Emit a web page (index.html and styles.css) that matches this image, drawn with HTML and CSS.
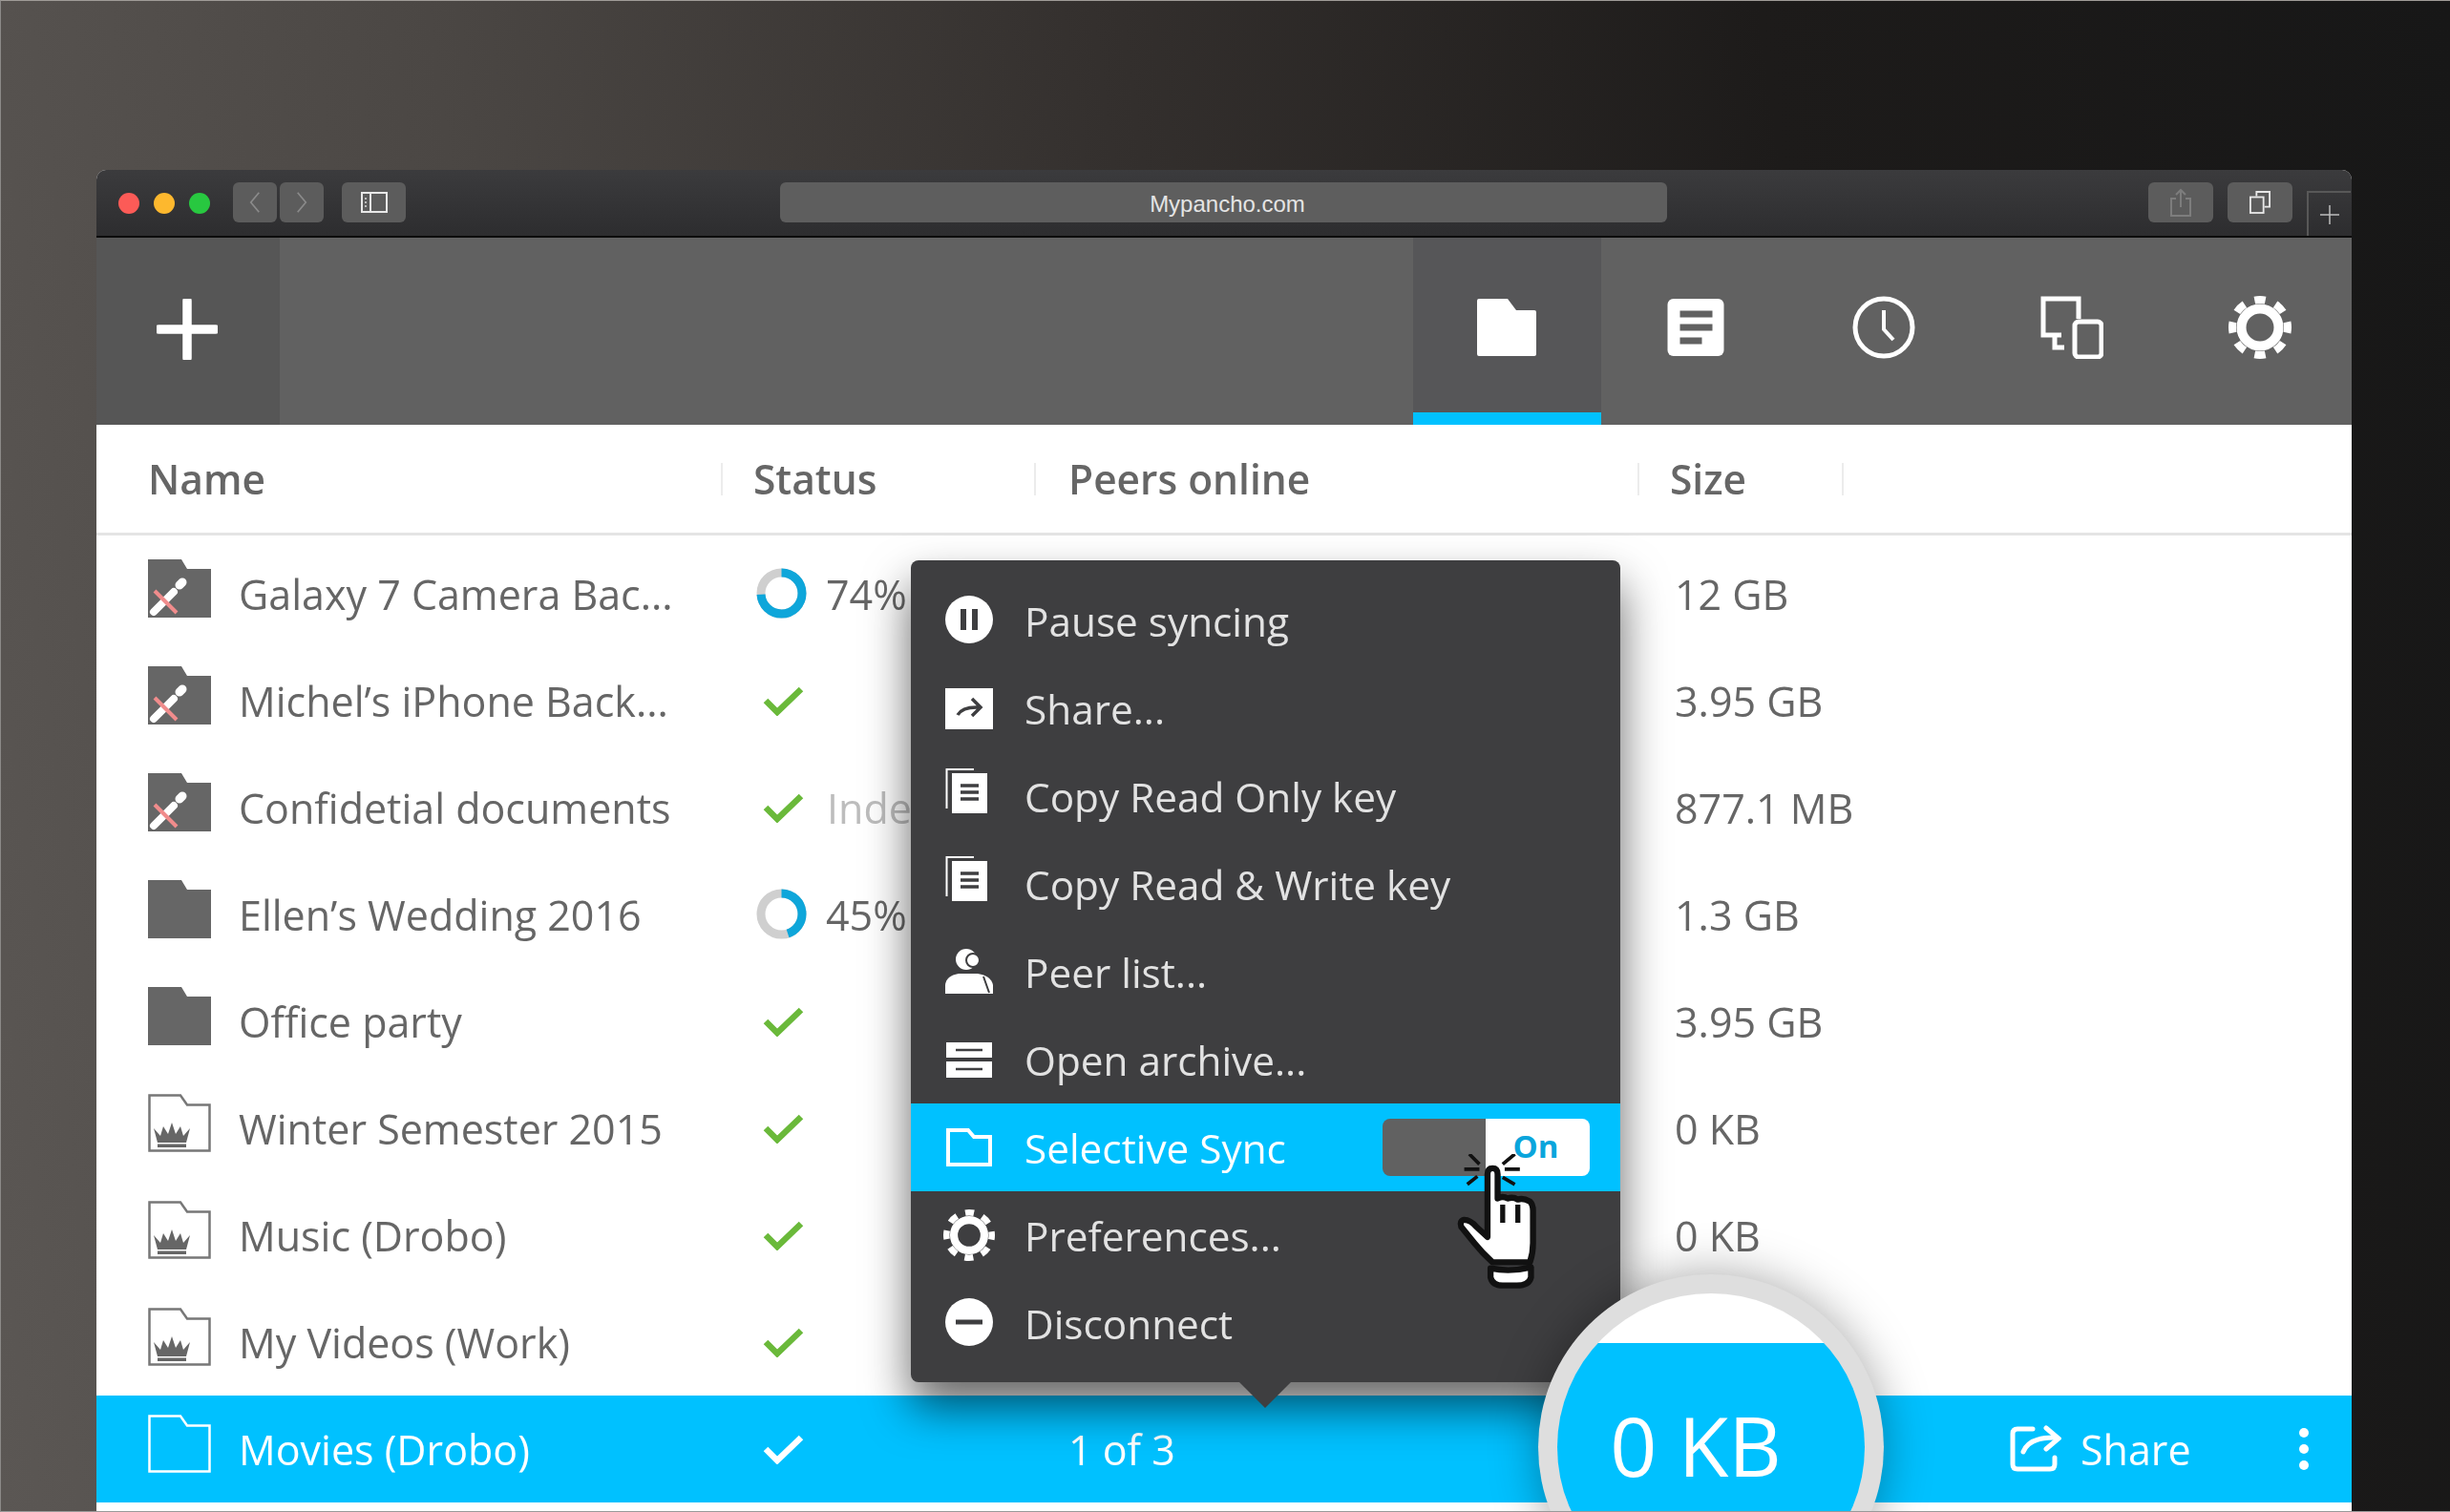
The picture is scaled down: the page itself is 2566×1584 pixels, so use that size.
FILE: index.html
```html
<!DOCTYPE html>
<html lang="en">
<head>
<meta charset="UTF-8" />
<title>Mypancho.com</title>
<link rel="stylesheet" href="styles.css">
</head>
<body>

<svg class="defs" width="0" height="0">
  <defs>
    <symbol id="folder" viewBox="0 0 66 61">
      <path d="M0 0H35L41 10H66V61H0Z" fill="#666"/>
    </symbol>
    <symbol id="folder-off" viewBox="0 0 66 61">
      <path d="M0 0H35L41 10H66V61H0Z" fill="#666"/>
      <path d="M6 55L27 34" stroke="#fff" stroke-width="8" stroke-linecap="round"/>
      <path d="M33 27L36 24" stroke="#fff" stroke-width="9" stroke-linecap="round"/>
      <path d="M7 33L30 56" stroke="#f08c8c" stroke-width="4"/>
    </symbol>
    <symbol id="folder-crown" viewBox="0 0 66 61">
      <path d="M1.500 1.500H34L41 11.500H64.500V59.500H1.500Z" fill="#fff" stroke="#777" stroke-width="2.500"/>
      <path d="M6 36L13 44L16 34L21 42L25 30L29 42L34 34L37 44L44 36L40 51H10Z" fill="#666"/>
      <path d="M10 52.500H40V56H10Z" fill="#666"/>
    </symbol>
    <symbol id="folder-line" viewBox="0 0 66 61">
      <path d="M1.500 1.500H34L41 11.500H64.500V59.500H1.500Z" fill="none" stroke="#fff" stroke-width="2.500"/>
    </symbol>
    <symbol id="check" viewBox="0 0 43 31">
      <path d="M3 15L15 27L40 3" fill="none" stroke="currentColor" stroke-width="6.500"/>
    </symbol>
    <symbol id="gear" viewBox="0 0 66 66">
      <circle cx="33" cy="33" r="29" fill="none" stroke="currentColor" stroke-width="8" pathLength="80" stroke-dasharray="5 5" stroke-dashoffset="2.500"/>
      <circle cx="33" cy="33" r="19.500" fill="none" stroke="currentColor" stroke-width="10"/>
    </symbol>
    <symbol id="copy" viewBox="0 0 44 48">
      <path d="M1.500 43V2H30" fill="none" stroke="#fff" stroke-width="2"/>
      <path d="M7 6H44V48H7Z" fill="#fff"/>
      <path d="M16 19H35M16 26H35M16 33H35" stroke="#3e3e40" stroke-width="3.500"/>
    </symbol>
  </defs>
</svg>

<div class="desk">
  <div class="window">

    <div class="titlebar">
      <div class="lights">
        <span class="light red"></span>
        <span class="light yellow"></span>
        <span class="light green"></span>
      </div>
      <div class="nav-pair">
        <span class="tbtn nav">
          <svg class="chev" viewBox="0 0 14 28"><path d="M12 2L2 14L12 26" fill="none" stroke="#8a8a8a" stroke-width="2"/></svg>
        </span>
        <span class="tbtn nav">
          <svg class="chev" viewBox="0 0 14 28"><path d="M2 2L12 14L2 26" fill="none" stroke="#8a8a8a" stroke-width="2"/></svg>
        </span>
      </div>
      <span class="tbtn side">
        <svg class="side-ico" viewBox="0 0 28 22">
          <rect x="1" y="1" width="26" height="20" fill="none" stroke="#e8e8e8" stroke-width="2"/>
          <path d="M10 1V21" stroke="#e8e8e8" stroke-width="2"/>
          <path d="M5 6V16" stroke="#bbb" stroke-width="2" stroke-dasharray="2 2"/>
        </svg>
      </span>
      <div class="url">Mypancho.com</div>
      <span class="tbtn small">
        <svg class="share-ico" viewBox="0 0 22 30"><path d="M6 11H1V29H21V11H16M11 20V2M6 7L11 2L16 7" fill="none" stroke="#7d7d7d" stroke-width="2"/></svg>
      </span>
      <span class="tbtn small">
        <svg class="tabs-ico" viewBox="0 0 24 26"><path d="M8 6V1H23V18H17" fill="none" stroke="#e8e8e8" stroke-width="2"/><rect x="1" y="7" width="15" height="18" fill="none" stroke="#e8e8e8" stroke-width="2"/></svg>
      </span>
      <div class="newtab">
        <svg class="newtab-ico" viewBox="0 0 20 20"><path d="M10 0V20M0 10H20" stroke="#bdbdbd" stroke-width="1.500"/></svg>
      </div>
    </div>

    <div class="toolbar">
      <div class="add">
        <svg class="add-ico" viewBox="0 0 64 64"><path d="M32 2V62M2 32H62" stroke="#fff" stroke-width="9.500" stroke-linecap="round"/></svg>
      </div>
      <div class="tabs">
        <div class="tab active">
          <svg class="tab-ico wide" viewBox="0 0 62 60"><path d="M2 0H32L41 12H60Q62 12 62 14V58Q62 60 60 60H2Q0 60 0 58V2Q0 0 2 0Z" fill="#fff"/></svg>
        </div>
        <div class="tab">
          <svg class="tab-ico" viewBox="0 0 59 60"><rect width="59" height="60" rx="6" fill="#fff"/><path d="M13 16H47M13 30H47M13 44H36" stroke="#616161" stroke-width="7"/></svg>
        </div>
        <div class="tab">
          <svg class="tab-ico big" viewBox="0 0 66 66"><circle cx="33" cy="33" r="30" fill="none" stroke="#fff" stroke-width="5"/><path d="M33 15V35L43 46" fill="none" stroke="#fff" stroke-width="4"/></svg>
        </div>
        <div class="tab">
          <svg class="tab-ico big" viewBox="0 0 66 66"><path d="M40 24V3H3V41H22M15 41V54H25" fill="none" stroke="#fff" stroke-width="5"/><rect x="36" y="27" width="28" height="37" rx="4" fill="none" stroke="#fff" stroke-width="5"/></svg>
        </div>
        <div class="tab">
          <svg class="tab-ico big white"><use href="#gear"/></svg>
        </div>
      </div>
    </div>

    <div class="thead">
      <div class="hcell h-name"><span>Name</span></div>
      <div class="hcell h-status"><span>Status</span></div>
      <div class="hcell h-peers"><span>Peers online</span></div>
      <div class="hcell h-size"><span>Size</span></div>
    </div>

    <div class="list">
      <div class="row">
        <svg class="folder"><use href="#folder-off"/></svg>
        <div class="name">Galaxy 7 Camera Bac...</div>
        <div class="status">
          <svg class="ring" viewBox="0 0 53 53"><circle class="ring-bg" cx="26.500" cy="26.500" r="21.500"/><circle class="ring-val" cx="26.500" cy="26.500" r="21.500" pathLength="100" stroke-dasharray="74 100"/></svg>
          <span>74%</span>
        </div>
        <div class="peers"></div>
        <div class="size">12 GB</div>
      </div>
      <div class="row">
        <svg class="folder"><use href="#folder-off"/></svg>
        <div class="name">Michel’s iPhone Back...</div>
        <div class="status"><svg class="check"><use href="#check"/></svg></div>
        <div class="peers"></div>
        <div class="size">3.95 GB</div>
      </div>
      <div class="row">
        <svg class="folder"><use href="#folder-off"/></svg>
        <div class="name">Confidetial documents</div>
        <div class="status"><svg class="check"><use href="#check"/></svg><span class="faint">Indexing</span></div>
        <div class="peers"></div>
        <div class="size">877.1 MB</div>
      </div>
      <div class="row">
        <svg class="folder"><use href="#folder"/></svg>
        <div class="name">Ellen’s Wedding 2016</div>
        <div class="status">
          <svg class="ring" viewBox="0 0 53 53"><circle class="ring-bg" cx="26.500" cy="26.500" r="21.500"/><circle class="ring-val" cx="26.500" cy="26.500" r="21.500" pathLength="100" stroke-dasharray="45 100"/></svg>
          <span>45%</span>
        </div>
        <div class="peers"></div>
        <div class="size">1.3 GB</div>
      </div>
      <div class="row">
        <svg class="folder"><use href="#folder"/></svg>
        <div class="name">Office party</div>
        <div class="status"><svg class="check"><use href="#check"/></svg></div>
        <div class="peers"></div>
        <div class="size">3.95 GB</div>
      </div>
      <div class="row">
        <svg class="folder"><use href="#folder-crown"/></svg>
        <div class="name">Winter Semester 2015</div>
        <div class="status"><svg class="check"><use href="#check"/></svg></div>
        <div class="peers"></div>
        <div class="size">0 KB</div>
      </div>
      <div class="row">
        <svg class="folder"><use href="#folder-crown"/></svg>
        <div class="name">Music (Drobo)</div>
        <div class="status"><svg class="check"><use href="#check"/></svg></div>
        <div class="peers"></div>
        <div class="size">0 KB</div>
      </div>
      <div class="row">
        <svg class="folder"><use href="#folder-crown"/></svg>
        <div class="name">My Videos (Work)</div>
        <div class="status"><svg class="check"><use href="#check"/></svg></div>
        <div class="peers"></div>
        <div class="size"></div>
      </div>
      <div class="row selected">
        <svg class="folder"><use href="#folder-line"/></svg>
        <div class="name">Movies (Drobo)</div>
        <div class="status"><svg class="check"><use href="#check"/></svg></div>
        <div class="peers">1 of 3</div>
        <div class="size"></div>
        <div class="actions">
          <svg class="act-share" viewBox="0 0 54 50"><path d="M24 4H8Q3 4 3 9V41Q3 46 8 46H42Q47 46 47 41V34" fill="none" stroke="#fff" stroke-width="5" stroke-linecap="round"/><path d="M14 28Q20 13 46 13" fill="none" stroke="#fff" stroke-width="5" stroke-linecap="round"/><path d="M38 3L51 14L38 25" fill="none" stroke="#fff" stroke-width="5" stroke-linecap="round"/></svg>
          <span class="act-label">Share</span>
          <div class="dots"><i></i><i></i><i></i></div>
        </div>
      </div>
    </div>

    <div class="menu">
      <div class="item">
        <div class="item-ico">
          <svg class="mi-50" viewBox="0 0 50 50"><circle cx="25" cy="25" r="25" fill="#fff"/><path d="M19 14V36M31 14V36" stroke="#3e3e40" stroke-width="6"/></svg>
        </div>
        <span>Pause syncing</span>
      </div>
      <div class="item">
        <div class="item-ico">
          <svg class="mi-share" viewBox="0 0 50 43"><rect width="50" height="43" fill="#fff"/><path d="M13 28Q18 19 36 20M28 11L37 20L28 29" fill="none" stroke="#3e3e40" stroke-width="3.500"/></svg>
        </div>
        <span>Share...</span>
      </div>
      <div class="item">
        <div class="item-ico"><svg class="mi-copy"><use href="#copy"/></svg></div>
        <span>Copy Read Only key</span>
      </div>
      <div class="item">
        <div class="item-ico"><svg class="mi-copy"><use href="#copy"/></svg></div>
        <span>Copy Read &amp; Write key</span>
      </div>
      <div class="item">
        <div class="item-ico">
          <svg class="mi-peer" viewBox="0 0 50 47"><circle cx="22" cy="11" r="11" fill="#fff"/><circle cx="29" cy="12" r="7" fill="#fff" stroke="#3e3e40" stroke-width="2"/><path d="M0 47V38Q1 28 14 26H34Q48 28 50 38V47Z" fill="#fff"/><path d="M40 29L46 46" stroke="#3e3e40" stroke-width="2"/></svg>
        </div>
        <span>Peer list...</span>
      </div>
      <div class="item">
        <div class="item-ico">
          <svg class="mi-arch" viewBox="0 0 48 37"><path d="M0 0H48V16H0ZM0 20H48V37H0Z" fill="#fff"/><path d="M10 8H38M10 28H38" stroke="#3e3e40" stroke-width="2.500"/></svg>
        </div>
        <span>Open archive...</span>
      </div>
      <div class="item on">
        <div class="item-ico">
          <svg class="mi-sync" viewBox="0 0 48 40"><path d="M2 2H23L29 9H46V38H2Z" fill="none" stroke="#fff" stroke-width="4"/></svg>
        </div>
        <span>Selective Sync</span>
        <div class="toggle"><div class="tg-off"></div><div class="tg-on">On</div></div>
      </div>
      <div class="item">
        <div class="item-ico"><svg class="mi-gear white"><use href="#gear"/></svg></div>
        <span>Preferences...</span>
      </div>
      <div class="item">
        <div class="item-ico">
          <svg class="mi-50" viewBox="0 0 50 50"><circle cx="25" cy="25" r="25" fill="#fff"/><path d="M11 25H39" stroke="#3e3e40" stroke-width="5"/></svg>
        </div>
        <span>Disconnect</span>
      </div>
    </div>

    <svg class="cursor" viewBox="0 0 85 135">
      <path d="M15 0L25 10M10 15H25M13 30L23 22M60 0L48 10M65 15H50M60 30L48 23" stroke="#111" stroke-width="3.500"/>
      <path d="M33 20Q33 14 38 14Q43 14 43 20V44Q48 41 53 44Q58 42 63 45Q68 43 75 47Q78 50 78 56V88Q78 98 75 107H38Q28 98 20 88L7 72Q5 66 10 65Q16 65 22 72L33 82Z" fill="#fff" stroke="#111" stroke-width="6" stroke-linejoin="round"/>
      <path d="M48 50V68M63 50V68" stroke="#111" stroke-width="5"/>
      <path d="M36 113Q55 117 76 112V122Q74 130 62 130H48Q38 130 36 122Z" fill="#fff" stroke="#111" stroke-width="6" stroke-linejoin="round"/>
    </svg>

    <div class="bubble">
      <div class="bubble-in"><span class="bubble-text">0 KB</span></div>
    </div>

  </div>
</div>

</body>
</html>
```

FILE: styles.css
```css
* { box-sizing: border-box; }
body {
  margin: 0;
  font-family: "Open Sans", sans-serif;
  color: #666;
}
.defs { position: absolute; }
.desk {
  height: 1584px;
  padding: 177px 103px 0 100px;
  overflow: hidden;
  background: linear-gradient(82deg, #5b5754 0%, #4b4744 24%, #332f2d 50%, #1d1b1a 74%, #171717 100%);
  border-top: 1px solid #a09c98;
  border-left: 1px solid #8c8a88;
  border-bottom: 1px solid #999;
}
.window {
  position: relative;
  height: 1500px;
  background: #fff;
  border-radius: 10px 10px 0 0;
  display: flex;
  flex-direction: column;
  overflow: hidden;
  filter: blur(.6px);
}

/* browser chrome */
.titlebar {
  height: 71px;
  flex: none;
  display: flex;
  align-items: flex-start;
  padding: 13px 0 0 23px;
  background: linear-gradient(#3b3b3d, #2d2d2f);
  border-bottom: 2px solid #0c0c0c;
}
.lights { display: flex; gap: 15px; margin: 11px 24px 0 0; }
.light { width: 22px; height: 22px; border-radius: 50%; }
.red { background: #fc5b57; }
.yellow { background: #fdb82e; }
.green { background: #28c840; }
.tbtn {
  height: 42px;
  background: #5c5c5c;
  border-radius: 6px;
  display: flex;
  align-items: center;
  justify-content: center;
}
.nav-pair { display: flex; gap: 3px; margin: 0 19px 0 0; }
.nav { width: 46px; }
.chev { width: 12px; height: 24px; }
.side { width: 67px; margin-right: 392px; }
.side-ico { width: 28px; height: 22px; }
.url {
  width: 929px;
  height: 42px;
  line-height: 45px;
  padding-left: 8px;
  background: #5e5e5e;
  border-radius: 6px;
  text-align: center;
  font-family: "Liberation Sans", sans-serif;
  font-size: 24px;
  color: #e4e4e4;
  margin-right: 504px;
}
.small { width: 68px; margin-right: 15px; }
.share-ico { width: 22px; height: 30px; }
.tabs-ico { width: 22px; height: 24px; }
.newtab {
  width: 46px;
  height: 47px;
  margin-top: 9px;
  border: solid #585858;
  border-width: 2px 0 0 2px;
  display: flex;
  align-items: center;
  justify-content: center;
}
.newtab-ico { width: 20px; height: 20px; }

/* app toolbar */
.toolbar {
  height: 196px;
  flex: none;
  display: flex;
  justify-content: space-between;
  background: #616161;
}
.add {
  width: 192px;
  background: #565656;
  display: flex;
  align-items: center;
  justify-content: center;
}
.add-ico { width: 64px; height: 64px; margin: 0 2px 4px 0; }
.tabs { display: flex; margin-right: -3px; }
.tab {
  width: 197.250px;
  padding-bottom: 13px;
  border-bottom: 13px solid transparent;
  display: flex;
  align-items: center;
  justify-content: center;
}
.tab.active { background: #565658; border-bottom-color: #00c1ff; }
.tab-ico { width: 60px; height: 60px; margin-top: 18px; }
.tab-ico.wide { width: 62px; }
.tab-ico.big { width: 66px; height: 66px; }
.white { color: #fff; }

/* table */
.thead {
  height: 116px;
  flex: none;
  display: flex;
  align-items: center;
  border-bottom: 3px solid #e4e4e4;
  font-size: 42.500px;
  font-weight: 600;
  padding-left: 54px;
}
.hcell { height: 34px; display: flex; align-items: center; border-left: 2px solid #ececec; }
.h-name { width: 600px; border-left: none; }
.h-status { width: 328px; padding-left: 32px; }
.h-peers { width: 632px; padding-left: 34px; }
.h-size { width: 216px; padding-left: 32px; border-right: 2px solid #ececec; }
.list { padding-top: 5px; }
.row {
  height: 112px;
  display: flex;
  align-items: center;
  padding-left: 54px;
  font-size: 43px;
  white-space: nowrap;
}
.folder { width: 66px; height: 61px; margin: -12px 29px 0 0; flex: none; }
.name { width: 535px; }
.status { width: 334px; display: flex; align-items: center; color: #666; }
.ring { width: 53px; height: 53px; margin: -2px 20px 0 7px; transform: rotate(-90deg); }
.ring-bg, .ring-val { fill: none; stroke-width: 9; }
.ring-bg { stroke: #cfcfcf; }
.ring-val { stroke: #0ea6da; }
.check { width: 43px; height: 31px; margin: 0 24px 0 14px; color: #6ab93a; }
.faint { color: #bdbdbd; }
.peers { width: 635px; }
.size { width: 351px; }
.selected { background: #00c1ff; color: #fff; }
.selected .check { color: #fff; }
.selected .peers { font-weight: 500; }
.actions { display: flex; align-items: center; }
.act-share { width: 54px; height: 50px; margin-right: 20px; }
.act-label { font-weight: 500; width: 229px; }
.dots { display: flex; flex-direction: column; gap: 7px; }
.dots i { display: block; width: 10px; height: 10px; border-radius: 50%; background: #fff; }

/* popup menu */
.menu {
  position: absolute;
  left: 853px;
  top: 409px;
  width: 743px;
  height: 861px;
  padding-top: 17px;
  background: #3e3e40;
  border-radius: 8px;
  box-shadow: 0 26px 48px rgba(0, 0, 0, .6);
  color: #e2e2e2;
  font-size: 42.300px;
}
.menu::after {
  content: "";
  position: absolute;
  left: 344px;
  bottom: -27px;
  border: solid transparent;
  border-width: 27px 27px 0;
  border-top-color: #3e3e40;
}
.item { height: 92px; display: flex; align-items: center; padding-left: 36px; position: relative; }
.item-ico { width: 50px; margin-right: 33px; display: flex; justify-content: center; flex: none; }
.item.on { background: #00c1ff; color: #fff; }
.mi-50 { width: 50px; height: 50px; margin-top: -2px; }
.mi-share { width: 50px; height: 43px; }
.mi-copy { width: 44px; height: 48px; margin: -12px 6px 0 0; }
.mi-peer { width: 50px; height: 47px; margin-top: -2px; }
.mi-arch { width: 48px; height: 37px; }
.mi-sync { width: 48px; height: 40px; }
.mi-gear { width: 54px; height: 54px; flex: none; }
.toggle {
  position: absolute;
  left: 494px;
  top: 16px;
  width: 217px;
  height: 60px;
  display: flex;
  border-radius: 8px;
  overflow: hidden;
}
.tg-off { width: 108px; background: #616161; }
.tg-on {
  flex: 1;
  background: #fff;
  color: #0aa5dc;
  font-size: 33px;
  font-weight: 700;
  text-align: center;
  line-height: 58px;
  padding-right: 4px;
}

/* hand cursor */
.cursor {
  position: absolute;
  left: 1422px;
  top: 1031px;
  width: 90px;
  height: 143px;
}

/* big size bubble */
.bubble {
  position: absolute;
  left: 1510px;
  top: 1157px;
  width: 362px;
  height: 362px;
  padding: 20px;
  border-radius: 50%;
  background: #dedede;
  box-shadow: 0 0 50px rgba(0, 0, 0, .35);
}
.bubble-in {
  height: 100%;
  border-radius: 50%;
  background: linear-gradient(#fff 0, #fff 52px, #00c1ff 52px);
  color: #fff;
  font-size: 86px;
  display: flex;
  align-items: center;
  justify-content: center;
}
.bubble-text { margin: 0 32px 6px 0; }
```
